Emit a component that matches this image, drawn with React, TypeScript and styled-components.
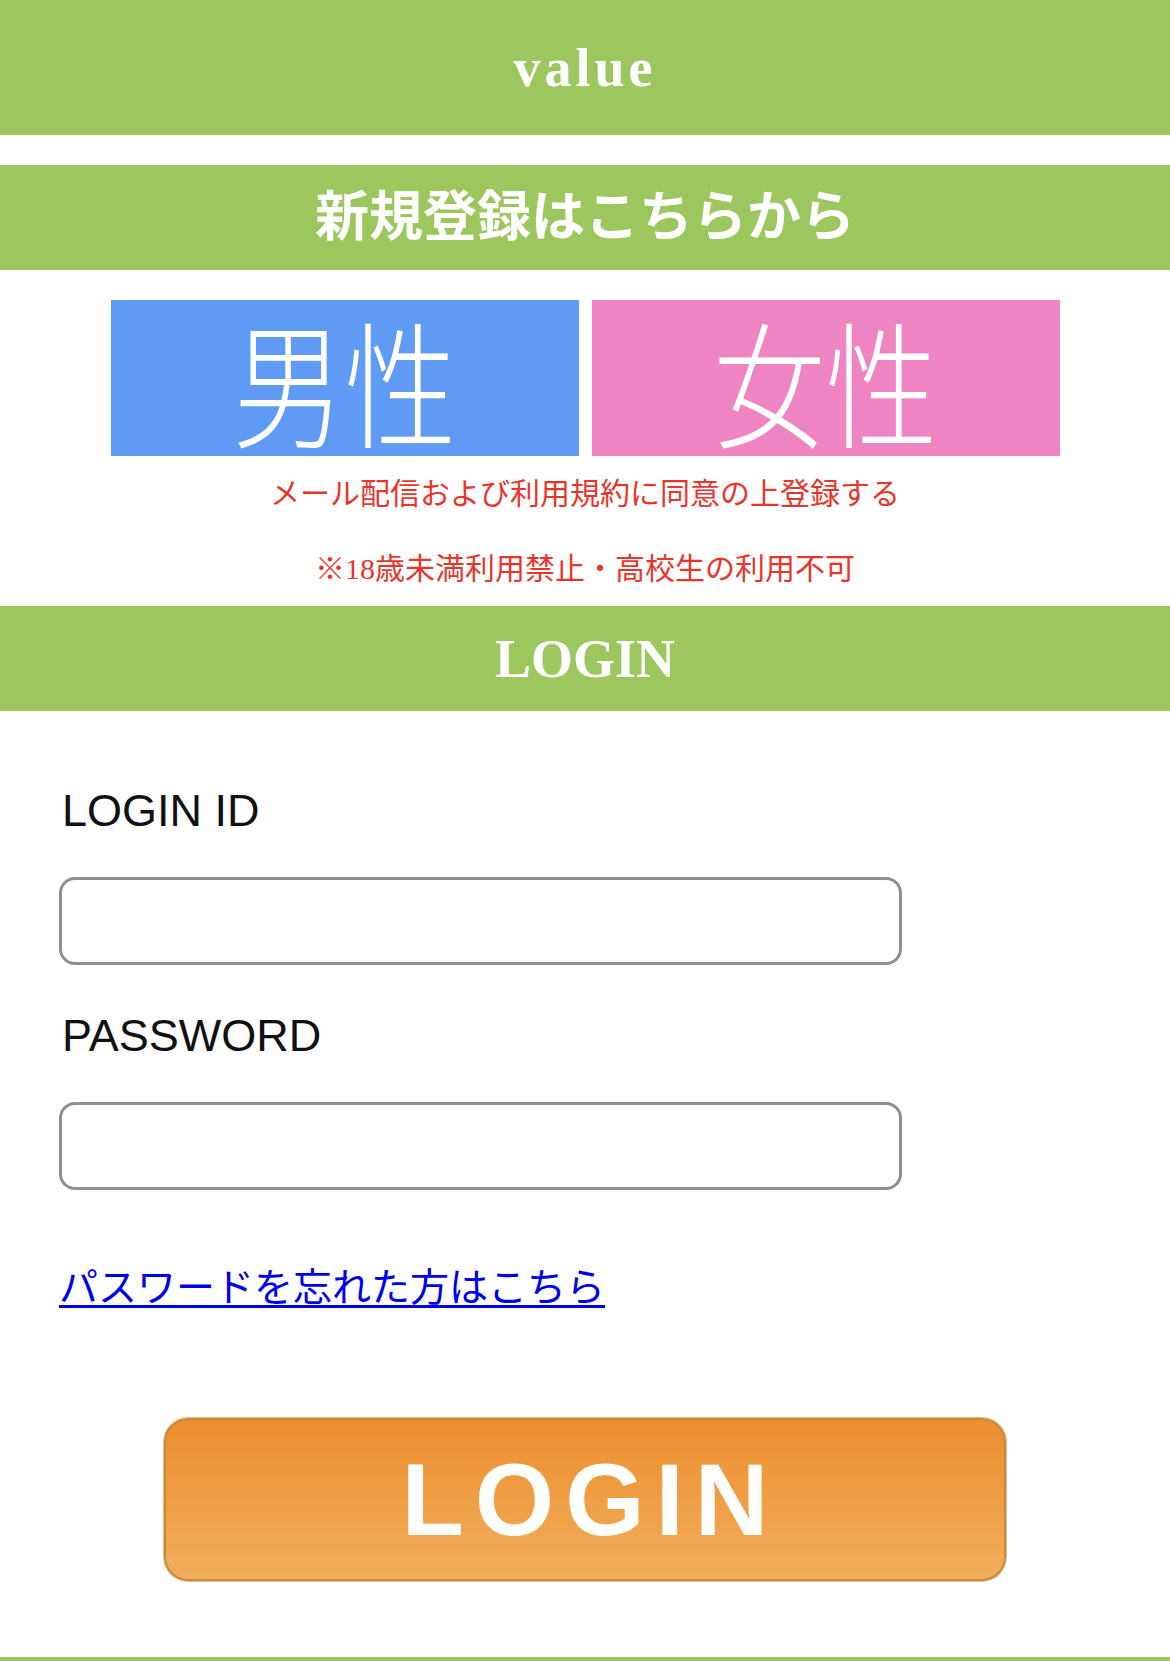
import React from "react";
import styled, { createGlobalStyle } from "styled-components";

const GlobalStyle = createGlobalStyle`
  html, body {
    margin: 0;
    padding: 0;
    background: #ffffff;
  }
  body {
    font-family: "Liberation Serif", "Noto Sans CJK JP", serif;
  }
  * {
    box-sizing: border-box;
  }
`;

const GREEN = "#9cc75f";

const Page = styled.div`
  width: 100%;
  display: flex;
  flex-direction: column;
`;

const Bar = styled.div<{ $height: number; $gap?: number; $spacing?: number }>`
  height: ${(p) => p.$height}px;
  margin-top: ${(p) => p.$gap ?? 0}px;
  background: ${GREEN};
  display: flex;
  align-items: center;
  justify-content: center;
  color: #ffffff;
  font-family: "Liberation Serif", "Noto Sans CJK JP", serif;
  font-weight: 700;
  font-size: 54px;
  letter-spacing: ${(p) => p.$spacing ?? 0}px;
  line-height: 1;
`;

const GenderRow = styled.div`
  margin-top: 30px;
  display: flex;
  justify-content: center;
  gap: 13px;
`;

const GenderButton = styled.a<{ $bg: string }>`
  width: 468px;
  height: 156px;
  background: ${(p) => p.$bg};
  display: flex;
  align-items: center;
  justify-content: center;
  color: #ffffff;
  text-decoration: none;
  font-family: "Noto Sans CJK JP", sans-serif;
  font-weight: 300;
  font-size: 112px;
  line-height: 1;
`;

const GenderText = styled.span`
  display: inline-block;
  transform: scaleY(1.22);
  transform-origin: center;
`;

const Notice = styled.p`
  margin: 0;
  height: 75px;
  display: flex;
  align-items: center;
  justify-content: center;
  color: #e8352c;
  font-size: 30px;
  line-height: 1;
`;

const LoginForm = styled.form`
  padding: 74px 0 0 59px;
  display: flex;
  flex-direction: column;
`;

const FieldLabel = styled.label<{ $gap?: number }>`
  display: block;
  margin-top: ${(p) => p.$gap ?? 0}px;
  padding-left: 3px;
  font-family: "Liberation Sans", Arial, sans-serif;
  font-size: 45px;
  line-height: 52px;
  height: 52px;
  color: #111111;
`;

const TextInput = styled.input`
  margin-top: 40px;
  width: 843px;
  height: 88px;
  border: 3px solid #8e8e93;
  border-radius: 16px;
  background: #ffffff;
  font-size: 40px;
  padding: 0 20px;
  outline: none;
`;

const ForgotLink = styled.a`
  margin-top: 74px;
  align-self: flex-start;
  font-size: 39px;
  line-height: 48px;
  color: #0000ee;
  text-decoration: underline;
  text-underline-offset: 4px;
  text-decoration-thickness: 3px;
`;

const ButtonRow = styled.div`
  display: flex;
  justify-content: center;
  margin-top: 106px;
`;

const LoginButton = styled.button`
  width: 842px;
  height: 163px;
  border-radius: 24px;
  border: 2px solid #c98a3c;
  box-shadow: 0 0 0 1px #dcc098;
  background: linear-gradient(to bottom, #ed8f31 0%, #ef9e44 50%, #f2ae5c 100%);
  color: #ffffff;
  font-family: "Liberation Sans", Arial, sans-serif;
  font-weight: 700;
  font-size: 102px;
  letter-spacing: 11px;
  padding: 0 0 0 11px;
  line-height: 1;
  display: flex;
  align-items: center;
  justify-content: center;
  cursor: pointer;
`;

const Footer = styled.div`
  margin-top: 76px;
  height: 60px;
  background: ${GREEN};
`;

export default function App() {
  return (
    <Page>
      <GlobalStyle />
      <Bar $height={135} $spacing={4}>value</Bar>
      <Bar $height={105} $gap={30}>新規登録はこちらから</Bar>
      <GenderRow>
        <GenderButton href="#" $bg="#5f9af5">
          <GenderText>男性</GenderText>
        </GenderButton>
        <GenderButton href="#" $bg="#ef84c3">
          <GenderText>女性</GenderText>
        </GenderButton>
      </GenderRow>
      <Notice>メール配信および利用規約に同意の上登録する</Notice>
      <Notice>※18歳未満利用禁止・高校生の利用不可</Notice>
      <Bar $height={105}>LOGIN</Bar>
      <LoginForm onSubmit={(e) => e.preventDefault()}>
        <FieldLabel htmlFor="login-id">LOGIN ID</FieldLabel>
        <TextInput id="login-id" type="text" />
        <FieldLabel htmlFor="login-pw" $gap={45}>PASSWORD</FieldLabel>
        <TextInput id="login-pw" type="password" />
        <ForgotLink href="#">パスワードを忘れた方はこちら</ForgotLink>
      </LoginForm>
      <ButtonRow>
        <LoginButton type="button">LOGIN</LoginButton>
      </ButtonRow>
      <Footer />
    </Page>
  );
}
